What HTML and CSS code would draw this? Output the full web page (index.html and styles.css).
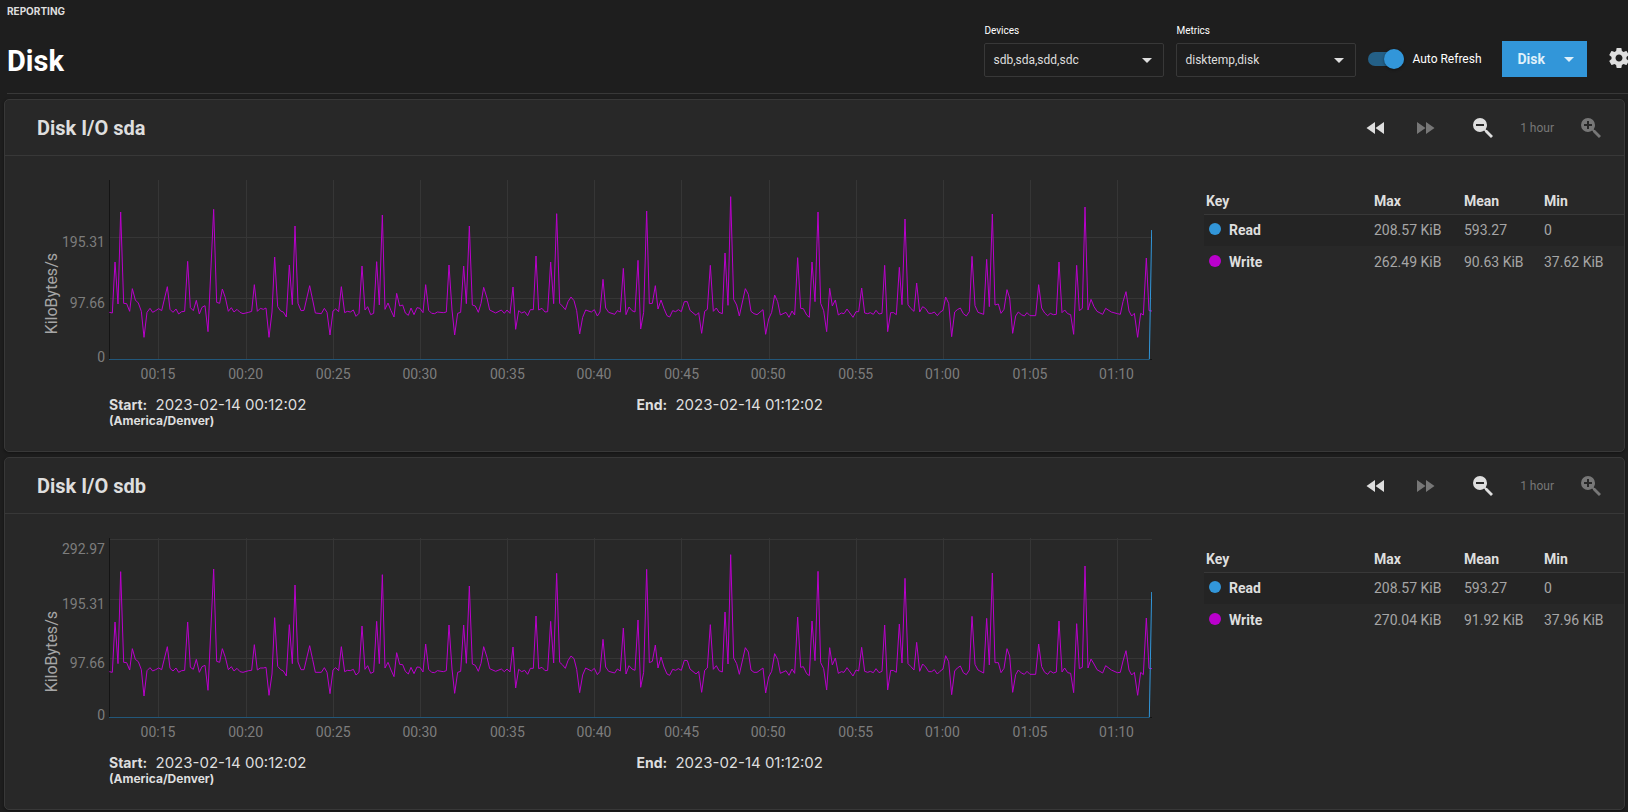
FILE: index.html
```html
<!DOCTYPE html>
<html lang="en">

<head>
    <meta charset="UTF-8">
    <meta name="viewport" content="width=device-width, initial-scale=1.0">
    <title>Reporting - Disk</title>
    <link rel="stylesheet" href="styles.css">
</head>

<body>
    <!-- shared icons -->
    <svg class="sprite" aria-hidden="true">
        <symbol id="rewind" viewBox="0 0 24 24"><path d="M11.5 12L20 18V6M11 18V6L2.5 12L11 18Z"/></symbol>
        <symbol id="forward" viewBox="0 0 24 24"><path d="M13 6V18L21.5 12M4 18L12.5 12L4 6V18Z"/></symbol>
        <symbol id="zoom-out" viewBox="0 0 24 24"><path fill-rule="evenodd" d="M9 2A7 7 0 0 1 16 9C16 10.57 15.5 12 14.61 13.19L15.41 14H16L22 20L20 22L14 16V15.41L13.19 14.61C12 15.5 10.57 16 9 16A7 7 0 0 1 2 9A7 7 0 0 1 9 2M5 8V10H13V8H5Z"/></symbol>
        <symbol id="zoom-in" viewBox="0 0 24 24"><path fill-rule="evenodd" d="M9 2A7 7 0 0 1 16 9C16 10.57 15.5 12 14.61 13.19L15.41 14H16L22 20L20 22L14 16V15.41L13.19 14.61C12 15.5 10.57 16 9 16A7 7 0 0 1 2 9A7 7 0 0 1 9 2M5 8V10H8V13H10V10H13V8H10V5H8V8H5Z"/></symbol>
        <symbol id="cog" viewBox="0 0 24 24"><path fill-rule="evenodd" d="M19.43 12.98c.04-.32.07-.64.07-.98s-.03-.66-.07-.98l2.11-1.65c.19-.15.24-.42.12-.64l-2-3.46c-.12-.22-.39-.3-.61-.22l-2.49 1c-.52-.4-1.08-.73-1.69-.98l-.38-2.65C14.46 2.18 14.25 2 14 2h-4c-.25 0-.46.18-.49.42l-.38 2.65c-.61.25-1.17.59-1.69.98l-2.49-1c-.23-.09-.49 0-.61.22l-2 3.46c-.13.22-.07.49.12.64l2.11 1.65c-.04.32-.07.65-.07.98s.03.66.07.98l-2.11 1.65c-.19.15-.24.42-.12.64l2 3.46c.12.22.39.3.61.22l2.49-1c.52.4 1.08.73 1.69.98l.38 2.65c.03.24.24.42.49.42h4c.25 0 .46-.18.49-.42l.38-2.65c.61-.25 1.17-.59 1.69-.98l2.49 1c.23.09.49 0 .61-.22l2-3.46c.12-.22.07-.49-.12-.64l-2.11-1.65zM12 15.5c-1.93 0-3.5-1.57-3.5-3.5s1.57-3.5 3.5-3.5 3.5 1.57 3.5 3.5-1.57 3.5-3.5 3.5z"/></symbol>
    </svg>

    <header class="page-header">
        <div class="heading">
            <div class="breadcrumb">REPORTING</div>
            <h1>Disk</h1>
        </div>
        <div class="controls">
            <div class="field">
                <label for="devices">Devices</label>
                <div class="select-box">
                    <select id="devices">
                        <option>sdb,sda,sdd,sdc</option>
                    </select>
                </div>
            </div>
            <div class="field">
                <label for="metrics">Metrics</label>
                <div class="select-box">
                    <select id="metrics">
                        <option>disktemp,disk</option>
                    </select>
                </div>
            </div>
            <div class="toggle">
                <input type="checkbox" id="refresh" checked>
                <label for="refresh">Auto Refresh</label>
            </div>
            <button type="button" class="btn-primary">Disk <span class="caret"></span></button>
            <button type="button" class="icon-btn settings" aria-label="Settings"><svg><use href="#cog"/></svg></button>
        </div>
    </header>

    <main>
        <section class="card">
            <div class="card-header">
                <h2>Disk I/O sda</h2>
                <div class="tools">
                    <button type="button" class="icon-btn" aria-label="Back"><svg><use href="#rewind"/></svg></button>
                    <button type="button" class="icon-btn forward" aria-label="Forward" disabled><svg><use href="#forward"/></svg></button>
                    <button type="button" class="icon-btn" aria-label="Zoom out"><svg><use href="#zoom-out"/></svg></button>
                    <span class="range">1 hour</span>
                    <button type="button" class="icon-btn" aria-label="Zoom in" disabled><svg><use href="#zoom-in"/></svg></button>
                </div>
            </div>
            <div class="card-body">
                <div class="chart">
                    <div class="y-title">KiloBytes/s</div>
                    <svg class="y-axis">
                        <text x="43" y="67">195.31</text>
                        <text x="43" y="128">97.66</text>
                        <text x="43" y="182">0</text>
                    </svg>
                    <svg class="plot" viewBox="327 90 3129 540" preserveAspectRatio="none">
                        <path class="grid" d="M475.5 90V628M739.5 90V628M1000.5 90V628M1261.5 90V628M1522.5 90V628M1783.5 90V628M2044.5 90V628M2308.5 90V628M2569.5 90V628M2830.5 90V628M3091.5 90V628M3352.5 90V628M327 262.5H3456M327 445.5H3456"/>
                        <path class="axis" d="M328.5 90V630M327 628.5H3456"/>
                        <polyline class="write" points="328,487 337,489 345,336 354,462 362,186 371,460 380,461 389,484 397,416 406,450 415,459 424,484 432,562 441,487 450,475 458,487 467,482 476,476 485,482 502,410 510,478 519,487 528,477 536,492 545,485 554,484 563,334 571,473 580,482 589,451 598,492 606,472 615,467 624,545 641,178 650,457 659,460 667,417 676,443 685,484 694,473 702,486 711,478 720,487 729,491 746,487 755,484 763,404 772,484 781,475 790,478 798,474 807,562 816,486 824,321 833,470 842,483 850,486 859,501 868,345 877,464 885,228 894,460 903,482 912,481 929,407 938,450 946,489 964,491 973,475 981,487 990,555 999,483 1007,477 1016,485 1024,410 1034,488 1042,484 1051,486 1060,480 1068,499 1077,490 1086,348 1095,480 1103,470 1112,494 1121,490 1130,335 1138,465 1147,195 1155,478 1164,459 1173,482 1182,501 1190,430 1199,468 1208,465
                            1216,489 1225,496 1233,474 1242,494 1251,473 1260,475 1269,488 1277,404 1286,481 1295,490 1304,491 1312,486 1330,488 1339,486 1347,345 1356,480 1364,555 1373,490 1382,487 1391,348 1399,461 1408,228 1417,465 1426,468 1435,487 1443,460 1451,412 1461,444 1469,480 1487,489 1504,480 1513,490 1521,480 1530,490 1539,411 1547,538 1556,482 1565,489 1574,485 1583,497 1591,479 1600,479 1608,318 1616,480 1626,475 1635,486 1643,485 1652,336 1661,461 1670,191 1679,460 1687,468 1696,479 1704,455 1713,441 1722,452 1730,482 1739,552 1748,502 1757,480 1774,486 1783,479 1792,498 1800,486 1809,388 1817,474 1826,487 1844,493 1852,482 1861,486 1870,355 1878,494 1887,471 1896,482 1905,486 1914,331 1922,537 1931,487 1940,183 1948,461 1957,460 1966,407 1974,477 1983,450 1992,476 2001,497 2009,501 2018,482 2027,485 2035,479 2044,485 2053,455 2062,455 2070,481 2088,496 2096,488 2105,550 2114,484 2122,478 2131,346 2140,484 2149,474 2157,487 2167,491 2175,309 2184,466 2192,140 2201,448 2210,465 2218,498 2236,416 2245,433 2253,484 2262,491 2271,494 2289,479 2297,553 2306,507 2315,487 2324,435 2333,455 2341,495 2358,487 2367,502 2376,483 2384,495 2393,323
                            2402,475 2410,476 2420,495 2428,502 2436,336 2445,455 2454,186 2462,460 2471,482 2480,545 2489,415 2497,468 2506,450 2515,495 2524,489 2532,491 2541,477 2559,502 2568,485 2576,485 2585,414 2594,489 2603,491 2611,488 2620,493 2628,481 2637,492 2646,490 2654,346 2663,545 2672,488 2681,488 2689,494 2698,352 2706,464 2715,207 2724,464 2732,475 2742,484 2750,399 2759,486 2768,470 2777,476 2786,490 2795,490 2803,486 2812,497 2820,487 2829,481 2837,441 2846,460 2855,560 2864,486 2872,479 2881,474 2890,491 2899,498 2908,485 2916,319 2925,467 2934,487 2951,493 2960,328 2968,470 2977,192 2985,465 2995,462 3003,490 3012,478 3021,419 3029,444 3038,550 3047,498 3055,486 3064,494 3073,498 3081,488 3090,497 3107,497 3116,404 3125,474 3134,489 3143,497 3151,490 3160,494 3169,493 3177,336 3186,488 3194,480 3203,491 3212,494 3221,553 3230,346 3238,482 3247,475 3255,171 3264,480 3273,448 3282,470 3291,484 3308,493 3317,475 3334,486 3352,491 3361,493 3369,455 3378,425 3387,483 3395,498 3403,490 3413,562 3422,490 3430,495 3439,324 3447,482 3456,483"/>
                        <path class="read-base" d="M327 628.5H3448"/>
                        <polyline class="read" points="3448,628 3455,240"/>
                    </svg>
                    <svg class="x-axis">
                        <text x="4.7%" y="19">00:15</text>
                        <text x="13.1%" y="19">00:20</text>
                        <text x="21.5%" y="19">00:25</text>
                        <text x="29.8%" y="19">00:30</text>
                        <text x="38.2%" y="19">00:35</text>
                        <text x="46.5%" y="19">00:40</text>
                        <text x="54.9%" y="19">00:45</text>
                        <text x="63.2%" y="19">00:50</text>
                        <text x="71.6%" y="19">00:55</text>
                        <text x="79.9%" y="19">01:00</text>
                        <text x="88.3%" y="19">01:05</text>
                        <text x="96.6%" y="19">01:10</text>
                    </svg>
                    <div class="period">
                        <div><strong>Start:</strong> 2023-02-14 00:12:02 <small>(America/Denver)</small></div>
                        <div><strong>End:</strong> 2023-02-14 01:12:02</div>
                    </div>
                </div>
                <table class="legend">
                    <thead>
                        <tr><th class="key">Key</th><th class="max">Max</th><th class="mean">Mean</th><th>Min</th></tr>
                    </thead>
                    <tbody>
                        <tr><th><span class="dot dot-read"></span>Read</th><td>208.57 KiB</td><td>593.27</td><td>0</td></tr>
                        <tr><th><span class="dot dot-write"></span>Write</th><td>262.49 KiB</td><td>90.63 KiB</td><td>37.62 KiB</td></tr>
                    </tbody>
                </table>
            </div>
        </section>

        <section class="card">
            <div class="card-header">
                <h2>Disk I/O sdb</h2>
                <div class="tools">
                    <button type="button" class="icon-btn" aria-label="Back"><svg><use href="#rewind"/></svg></button>
                    <button type="button" class="icon-btn forward" aria-label="Forward" disabled><svg><use href="#forward"/></svg></button>
                    <button type="button" class="icon-btn" aria-label="Zoom out"><svg><use href="#zoom-out"/></svg></button>
                    <span class="range">1 hour</span>
                    <button type="button" class="icon-btn" aria-label="Zoom in" disabled><svg><use href="#zoom-in"/></svg></button>
                </div>
            </div>
            <div class="card-body">
                <div class="chart">
                    <div class="y-title">KiloBytes/s</div>
                    <svg class="y-axis">
                        <text x="43" y="16">292.97</text>
                        <text x="43" y="71">195.31</text>
                        <text x="43" y="130">97.66</text>
                        <text x="43" y="182">0</text>
                    </svg>
                    <svg class="plot" viewBox="327 24 3129 540" preserveAspectRatio="none">
                        <path class="grid" d="M475.5 24V562M739.5 24V562M1000.5 24V562M1261.5 24V562M1522.5 24V562M1783.5 24V562M2044.5 24V562M2308.5 24V562M2569.5 24V562M2830.5 24V562M3091.5 24V562M3352.5 24V562M327 28.5H3456M327 208.5H3456M327 385.5H3456"/>
                        <path class="axis" d="M328.5 24V564M327 562.5H3456"/>
                        <polyline class="write" points="328,425 337,427 345,276 354,401 362,125 371,397 380,398 389,420 397,356 406,388 415,395 424,419 432,498 441,422 450,413 458,423 467,419 476,414 485,419 502,350 510,415 519,423 528,414 536,427 545,422 554,421 563,276 571,412 580,418 589,388 598,427 606,410 615,406 624,481 641,117 650,394 659,397 667,356 676,382 685,419 694,410 702,423 711,415 720,425 729,427 746,422 755,421 763,344 772,420 781,414 790,414 798,412 807,496 816,432 824,263 833,409 842,419 850,423 859,438 868,284 877,401 885,165 894,396 903,419 912,419 929,347 938,389 946,427 964,427 973,413 981,427 990,491 999,420 1007,413 1016,422 1024,350 1034,425 1042,421 1051,422 1060,418 1068,435 1077,427 1086,288 1095,418 1103,407 1112,430 1121,426 1130,274 1138,401 1147,134 1155,414 1164,397 1173,420 1182,440 1190,368 1199,403 1208,404
                            1216,424 1225,432 1233,412 1242,431 1251,411 1260,412 1269,426 1277,342 1286,418 1295,427 1304,428 1312,422 1330,425 1339,422 1347,285 1356,417 1364,490 1373,427 1382,424 1391,285 1399,400 1408,168 1417,402 1426,406 1435,424 1443,400 1451,350 1461,382 1469,416 1487,424 1504,417 1513,425 1521,417 1530,426 1539,351 1547,474 1556,418 1565,425 1574,421 1583,433 1591,415 1600,415 1608,258 1616,416 1626,412 1635,422 1643,421 1652,274 1661,399 1670,130 1679,397 1687,404 1696,415 1704,392 1713,378 1722,386 1730,418 1739,488 1748,435 1757,414 1774,423 1783,415 1792,434 1800,424 1809,328 1817,411 1826,424 1844,429 1852,417 1861,423 1870,294 1878,432 1887,407 1896,417 1905,421 1914,270 1922,472 1931,427 1940,118 1948,398 1957,394 1966,345 1974,414 1983,381 1992,411 2001,432 2009,436 2018,418 2027,421 2035,416 2044,421 2053,391 2062,392 2070,417 2088,432 2096,424 2105,487 2114,421 2122,414 2131,284 2140,418 2149,407 2157,422 2167,426 2175,246 2184,402 2192,74 2201,384 2210,401 2218,433 2236,353 2245,366 2253,420 2262,427 2271,427 2289,414 2297,489 2306,441 2315,424 2324,371 2333,388 2341,430 2358,422 2367,436 2376,417 2384,430 2393,261
                            2402,412 2410,410 2420,431 2428,437 2436,273 2445,392 2454,124 2462,398 2471,416 2480,480 2489,353 2497,405 2506,384 2515,430 2524,425 2532,427 2541,413 2559,438 2568,420 2576,423 2585,352 2594,424 2603,427 2611,424 2620,428 2628,416 2637,428 2646,424 2654,285 2663,480 2672,421 2681,422 2689,427 2698,282 2706,399 2715,145 2724,401 2732,409 2742,420 2750,337 2759,424 2768,402 2777,411 2786,425 2795,425 2803,419 2812,432 2820,424 2829,417 2837,377 2846,395 2855,494 2864,423 2872,414 2881,408 2890,428 2899,434 2908,420 2916,259 2925,403 2934,420 2951,429 2960,265 2968,405 2977,129 2985,398 2995,398 3003,428 3012,415 3021,356 3029,378 3038,487 3047,434 3055,420 3064,429 3073,433 3081,424 3090,433 3107,433 3116,342 3125,410 3134,427 3143,433 3151,423 3160,429 3169,426 3177,273 3186,426 3194,414 3203,428 3212,430 3221,488 3230,281 3238,416 3247,412 3255,108 3264,414 3273,387 3282,402 3291,419 3308,429 3317,407 3334,420 3352,428 3361,427 3369,393 3378,362 3387,420 3395,435 3403,427 3413,496 3422,427 3430,434 3439,264 3447,415 3456,416"/>
                        <path class="read-base" d="M327 562.5H3448"/>
                        <polyline class="read" points="3448,562 3455,186"/>
                    </svg>
                    <svg class="x-axis">
                        <text x="4.7%" y="19">00:15</text>
                        <text x="13.1%" y="19">00:20</text>
                        <text x="21.5%" y="19">00:25</text>
                        <text x="29.8%" y="19">00:30</text>
                        <text x="38.2%" y="19">00:35</text>
                        <text x="46.5%" y="19">00:40</text>
                        <text x="54.9%" y="19">00:45</text>
                        <text x="63.2%" y="19">00:50</text>
                        <text x="71.6%" y="19">00:55</text>
                        <text x="79.9%" y="19">01:00</text>
                        <text x="88.3%" y="19">01:05</text>
                        <text x="96.6%" y="19">01:10</text>
                    </svg>
                    <div class="period">
                        <div><strong>Start:</strong> 2023-02-14 00:12:02 <small>(America/Denver)</small></div>
                        <div><strong>End:</strong> 2023-02-14 01:12:02</div>
                    </div>
                </div>
                <table class="legend">
                    <thead>
                        <tr><th class="key">Key</th><th class="max">Max</th><th class="mean">Mean</th><th>Min</th></tr>
                    </thead>
                    <tbody>
                        <tr><th><span class="dot dot-read"></span>Read</th><td>208.57 KiB</td><td>593.27</td><td>0</td></tr>
                        <tr><th><span class="dot dot-write"></span>Write</th><td>270.04 KiB</td><td>91.92 KiB</td><td>37.96 KiB</td></tr>
                    </tbody>
                </table>
            </div>
        </section>
    </main>
</body>

</html>
```

FILE: styles.css
```css
* {
    box-sizing: border-box;
}

body {
    margin: 0;
    background-color: #1e1e1e;
    color: #dedede;
    font-family: Roboto, sans-serif;
    font-size: 14px;
    overflow-x: hidden;
}

h1,
h2 {
    margin: 0;
    font-weight: bold;
}

.sprite {
    display: none;
}

/* header */
.page-header {
    display: flex;
    justify-content: space-between;
    margin-left: 7px;
    padding: 3px 0 16px;
    border-bottom: 1px solid #383838;
}

.breadcrumb {
    font-family: Inter, sans-serif;
    font-size: 10px;
    font-weight: bold;
    line-height: 16px;
}

h1 {
    margin-top: 26px;
    color: #fff;
    font-size: 29px;
    line-height: 32px;
}

.controls {
    display: flex;
    align-items: flex-end;
    margin-right: -3px;
}

.field {
    width: 180px;
    margin-right: 12px;
}

.field label {
    display: block;
    margin-bottom: 4px;
    color: #fff;
    font-size: 10px;
    line-height: 16px;
}

.select-box {
    position: relative;
}

.select-box::after,
.caret {
    width: 0;
    height: 0;
    border: 5px solid transparent;
    border-top-color: currentColor;
    border-bottom: none;
}

.select-box::after {
    content: "";
    position: absolute;
    top: 15px;
    right: 12px;
    pointer-events: none;
}

select {
    display: block;
    width: 100%;
    height: 34px;
    padding: 0 8px;
    appearance: none;
    background-color: #1e1e1e;
    border: 1px solid #383838;
    border-radius: 2px;
    color: #dedede;
    font-family: inherit;
    font-size: 12px;
}

.toggle {
    display: flex;
    align-items: center;
    gap: 8px;
    height: 36px;
    margin-right: 20px;
    color: #fff;
    font-size: 12px;
}

.toggle input {
    position: relative;
    width: 36px;
    height: 14px;
    margin: 0;
    appearance: none;
    background-color: #246087;
    border-radius: 7px;
}

.toggle input::after {
    content: "";
    position: absolute;
    top: -3px;
    right: 0;
    width: 20px;
    height: 20px;
    background-color: #3296d9;
    border-radius: 50%;
    box-shadow: 0 1px 3px rgba(0, 0, 0, 0.4);
}

.btn-primary {
    display: flex;
    align-items: center;
    gap: 19px;
    height: 36px;
    margin-right: 20px;
    padding: 0 13px 0 16px;
    background-color: #3296d9;
    border: none;
    color: #dff0fa;
    font-family: inherit;
    font-size: 14px;
    font-weight: bold;
}

.icon-btn {
    padding: 0;
    background: none;
    border: none;
    color: #dedede;
}

.icon-btn svg {
    display: block;
    width: 24px;
    height: 24px;
    fill: currentColor;
}

.icon-btn:disabled {
    color: #777;
}

.settings {
    margin-bottom: 7px;
}

/* cards */
main {
    display: flex;
    flex-direction: column;
    gap: 5px;
    padding: 5px 3px 2px 4px;
}

.card {
    background-color: #282828;
    border: 1px solid #383838;
    border-radius: 5px;
    box-shadow: 0 1px 3px rgba(0, 0, 0, 0.4);
}

.card-header {
    display: flex;
    align-items: center;
    justify-content: space-between;
    height: 56px;
    padding: 0 21px 0 32px;
    border-bottom: 1px solid #383838;
}

h2 {
    font-size: 20px;
}

.tools {
    display: flex;
    align-items: center;
    gap: 25px;
}

.forward {
    margin-right: 9px;
}

.range {
    color: #777;
    font-size: 12px;
}

.card-body {
    display: grid;
    grid-template-columns: 1fr 420px;
    gap: 52px;
    padding: 24px 0 22px;
}

/* chart */
.chart {
    display: grid;
    grid-template-columns: 20px 47px 1fr;
    padding-left: 37px;
}

.y-title {
    align-self: end;
    margin-bottom: 26px;
    color: #a6a6a6;
    font-size: 16px;
    line-height: 20px;
    writing-mode: vertical-rl;
    transform: rotate(180deg);
}

.y-axis,
.x-axis {
    overflow: visible;
    fill: #7d7d7d;
}

.y-axis {
    width: 47px;
    height: 180px;
    text-anchor: end;
}

.plot {
    width: 100%;
    height: 180px;
}

.x-axis {
    grid-column: 3;
    width: 100%;
    height: 24px;
    text-anchor: middle;
}

.plot path,
.plot polyline {
    fill: none;
    vector-effect: non-scaling-stroke;
}

.grid {
    stroke: #363636;
}

.axis {
    stroke: #141414;
}

.write {
    stroke: #ba00cc;
}

.read {
    stroke: #3296d9;
}

.read-base {
    stroke: #22577a;
}

.period {
    display: grid;
    grid-column: 3;
    grid-template-columns: 1fr 1fr;
    gap: 12px;
    margin-top: 13px;
    font-family: Inter, sans-serif;
    font-size: 15px;
    line-height: 16px;
}

.period strong {
    margin-right: 4px;
    font-size: 14px;
}

.period small {
    display: block;
    font-size: 12px;
    font-weight: bold;
}

/* legend table */
.legend {
    align-self: start;
    width: 100%;
    border-collapse: collapse;
    table-layout: fixed;
}

.legend th {
    padding: 0 2px;
    text-align: left;
}

.legend td {
    padding: 0 2px;
    color: #a6a6a6;
}

.legend thead th {
    height: 34px;
    padding-top: 8px;
    border-bottom: 1px solid #383838;
}

.legend tbody tr {
    height: 32px;
}

.legend tbody tr:first-child {
    background-color: #242424;
}

.legend .key {
    width: 168px;
}

.legend .max {
    width: 90px;
}

.legend .mean {
    width: 80px;
}

.dot {
    display: inline-block;
    width: 12px;
    height: 12px;
    margin: 0 8px 0 3px;
    border-radius: 50%;
    vertical-align: 0;
}

.dot-read {
    background-color: #3296d9;
}

.dot-write {
    background-color: #ba00cc;
}
```
